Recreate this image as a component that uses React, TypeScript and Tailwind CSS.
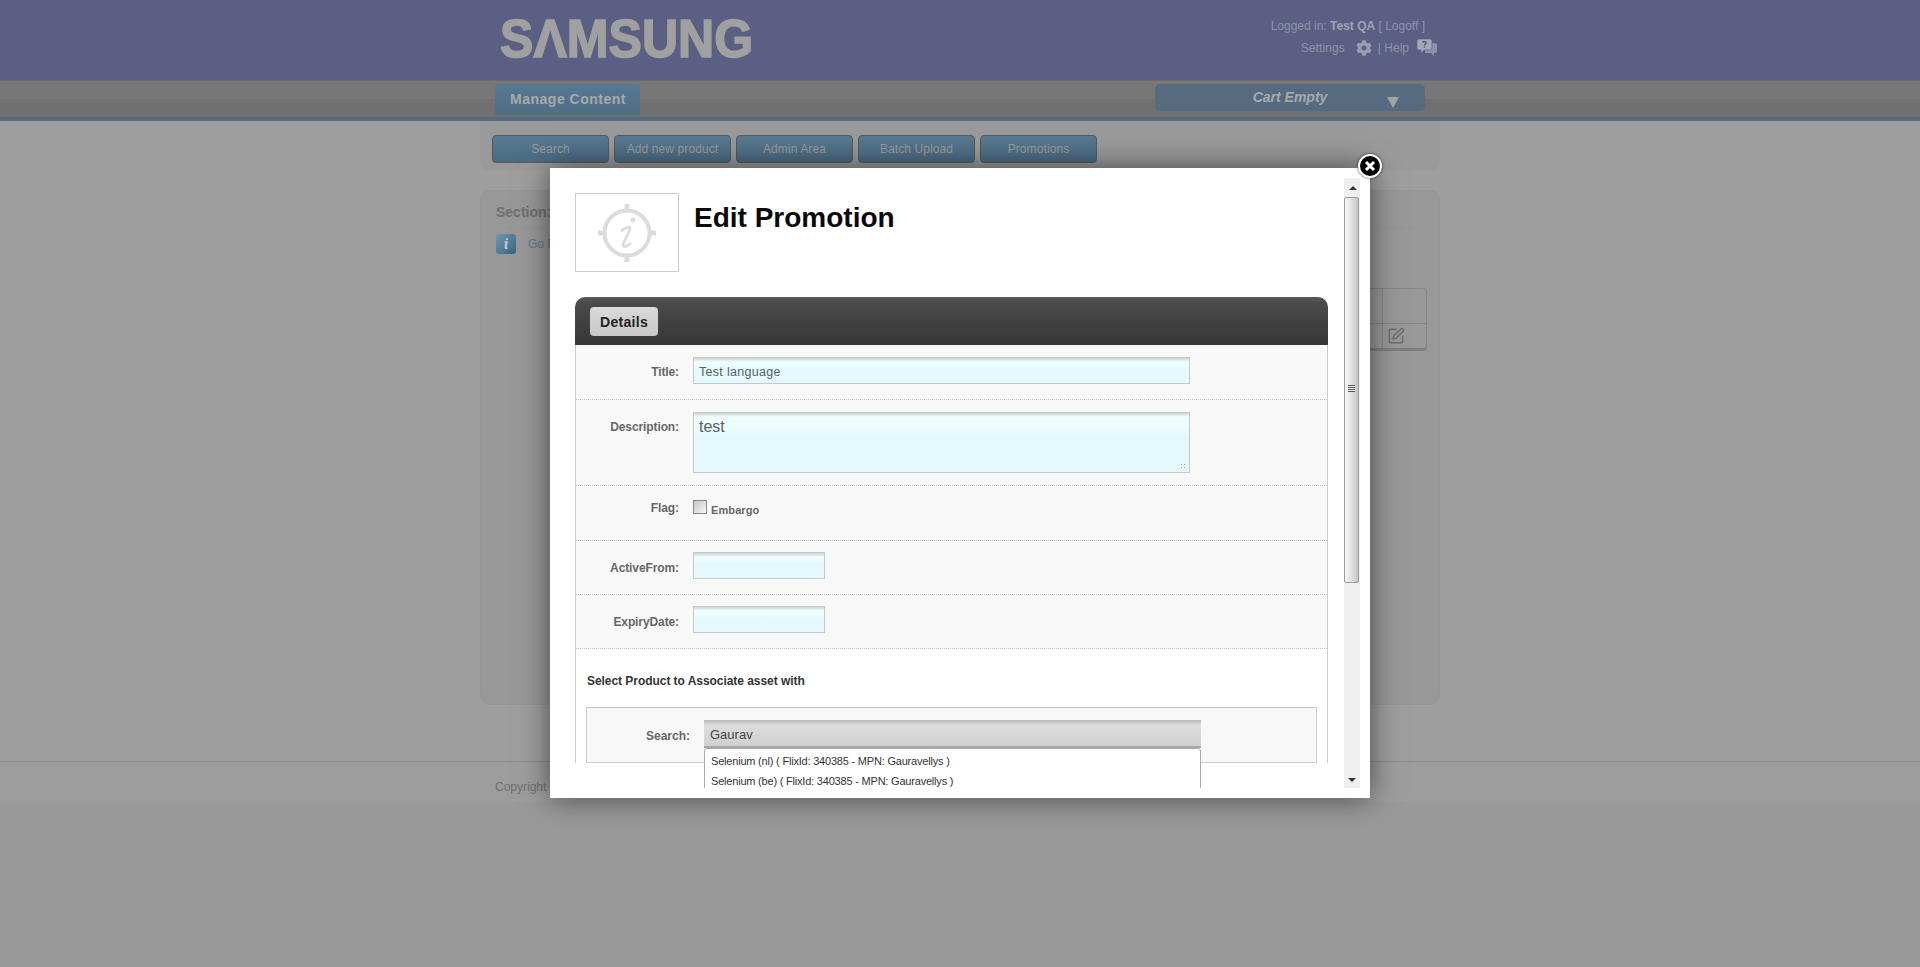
import { SquarePen } from 'lucide-react';
import { FaCog } from 'react-icons/fa';

const navButtons = ['Search', 'Add new product', 'Admin Area', 'Batch Upload', 'Promotions'];

const fieldClass =
  'border border-[#c8c8c8] bg-[linear-gradient(#cbd3d5,#f0ffff_4px,#e3f9fe_45%)] text-[#5f5f5f] outline-none';

const rowClass = 'flex bg-[#f8f8f8] border-b border-dotted border-[#c0c0c0]';

const labelClass = 'w-[103px] shrink-0 text-right text-[12px] font-bold leading-[14px] tracking-[-0.1px] text-[#666]';

function ChatIcon() {
  return (
    <svg width="20" height="17" viewBox="0 0 20 17" className="mt-[-1px]">
      <path d="M8 4h10a2 2 0 0 1 2 2v6a2 2 0 0 1-2 2h-1v3l-3-3H8z" fill="#8f93a9" />
      <path d="M2 0h11a2 2 0 0 1 2 2v7a2 2 0 0 1-2 2H7l-3 3v-3H2a2 2 0 0 1-2-2V2a2 2 0 0 1 2-2z" fill="#a3a6b6" stroke="#5b5f83" strokeWidth="0.6" />
      <path d="M5.6 3.4c.4-1 3.4-1.2 3.4.6 0 1.3-1.6 1.2-1.6 2.6M7.4 7.4v1.4" fill="none" stroke="#50536f" strokeWidth="1.4" />
    </svg>
  );
}

function InfoMark() {
  return (
    <svg width="58" height="58" viewBox="0 0 58 58">
      <circle cx="29" cy="29" r="22.500" fill="none" stroke="#dcdcdc" strokeWidth="4" />
      <path d="M26.500 0h5v6h-5zM26.500 52h5v6h-5zM0 26.500h6v5H0zM52 26.500h6v5h-6z" fill="#dcdcdc" />
      <circle cx="35" cy="16" r="2.500" fill="#dcdcdc" />
      <path d="M23 27c3-2 9-6 9-3 0 4-7 14-7 17 0 3 5 1 8-2" fill="none" stroke="#dcdcdc" strokeWidth="2.800" />
    </svg>
  );
}

function Page() {
  return (
    <div className="flex flex-col">
      <header className="h-[80px] bg-[#5b5f83]">
        <div className="mx-auto flex h-full w-[960px] justify-between pl-[20px] pr-[15px]">
          <div
            aria-label="SAMSUNG"
            className="mt-[9px] h-[60px] origin-left scale-x-[0.945] text-[53px] font-bold leading-[60px] text-[#a0a0a0] [-webkit-text-stroke:1.6px_#a0a0a0]"
          >
            SΛMSUNG
          </div>
          <div className="relative pt-[19px] text-right text-[12px] leading-[14px] text-[#8f93a9]">
            <div>
              Logged in: <span className="font-bold text-[#a0a3b2]">Test QA</span> [ Logoff ]
            </div>
            <div className="mr-[-12px] mt-[7px] flex items-center justify-end">
              <span className="tracking-[0.1px]">Settings</span>
              <FaCog className="ml-[11px] mr-[6px] text-[16px] text-[#9a9db0]" />
              <span>| Help</span>
              <span className="ml-[8px]">
                <ChatIcon />
              </span>
            </div>
          </div>
        </div>
      </header>

      <nav className="h-[41px] border-t border-[#6c6c6c] border-b-[4px] border-b-[#566a80] bg-[linear-gradient(#777777_50%,#707070_50%)]">
        <div className="mx-auto flex h-full w-[960px] justify-between pl-[15px] pr-[15px] pt-[3px]">
          <div className="h-[31px] w-[145px] rounded-t-[4px] bg-[linear-gradient(#567890,#4f6f86)] pl-[1px] text-center text-[14px] font-bold leading-[30px] tracking-[0.5px] text-[#a9a9a9]">
            Manage Content
          </div>
          <div className="relative h-[27px] w-[270px] rounded-[5px] bg-[#566a80] text-center text-[14px] font-bold italic leading-[26px] text-[#a9a9a9]">
            Cart Empty
            <span className="absolute left-[232px] top-[13px] h-0 w-0 border-x-[6.5px] border-t-[11px] border-x-transparent border-t-[#a2a2a2]" />
          </div>
        </div>
      </nav>

      <main className="h-[640px] bg-[#9e9e9e]">
        <div className="mx-auto w-[960px]">
          <div className="flex h-[50px] gap-[5px] rounded-b-[10px] bg-[#9a9a9a] pl-[12px] pt-[14px]">
            {navButtons.map((label) => (
              <div
                key={label}
                className="h-[28px] w-[117px] rounded-[4px] border border-[#555a5e] bg-[linear-gradient(#587a92,#4b6a82)] text-center text-[12px] leading-[26px] tracking-[0.1px] text-[#9c9c9c]"
              >
                {label}
              </div>
            ))}
          </div>

          <section className="mt-[19px] h-[515px] rounded-[10px] border border-[#949494] bg-[#989898] pl-[15px] pr-[12px] pt-[14px]">
            <div className="border-b border-dotted border-[#929292] pb-[8px] text-[14px] font-bold leading-[15px] text-[#6f6f6f]">
              Section:
            </div>
            <div className="mt-[5px] flex items-center gap-[12px] text-[12px] text-[#557a92]">
              <div className="flex h-[20px] w-[20px] items-center justify-center rounded-[3px] bg-[linear-gradient(135deg,#6e96b2,#3b6484)] font-serif text-[15px] font-bold italic text-[#c8c8c8]">
                i
              </div>
              Go Back
            </div>
            <div className="ml-auto mt-[34px] flex h-[63px] w-[80px] flex-col rounded-[4px] border-[1px] border-b-[3px] border-[#858585] border-b-[#7f7f7f]">
              <div className="flex h-[36px] justify-end border-b border-[#858585]">
                <div className="w-[44px] border-l border-[#858585]" />
              </div>
              <div className="ml-auto flex h-[24px] w-[44px] items-center border-l border-[#858585] pl-[4px]">
                <SquarePen size={18} strokeWidth={1.8} className="text-[#6c6c6c]" />
              </div>
            </div>
          </section>
        </div>
      </main>

      <footer className="h-[41px] border-t border-[#8b8b8b] bg-[#9d9d9d]">
        <div className="mx-auto w-[960px] pl-[15px] pt-[18px] text-[12px] leading-[14px] text-[#6f6f6f]">
          Copyright
        </div>
      </footer>
    </div>
  );
}

function Scrollbar() {
  return (
    <div className="relative h-[610px] w-[16px] shrink-0 bg-[#efefef]">
      <div className="absolute left-[5px] top-[8px] h-0 w-0 border-x-[4px] border-b-[4px] border-x-transparent border-b-[#333]" />
      <div className="absolute left-0 top-[19px] flex h-[386px] w-[15px] items-center justify-center rounded-[2px] border border-[#9c9c9c] bg-[linear-gradient(90deg,#f4f4f4,#e4e4e4_45%,#c4c4c6)] pb-[3px]">
        <div className="h-[7px] w-[7px] bg-[repeating-linear-gradient(#555_0,#555_1px,#eee_1px,#eee_2px)]" />
      </div>
      <div className="absolute bottom-[6px] left-[4px] h-0 w-0 border-x-[4px] border-t-[4px] border-x-transparent border-t-[#333]" />
    </div>
  );
}

function Modal() {
  return (
    <div className="absolute left-[550px] top-[168px] h-[630px] w-[820px] bg-white py-[10px] pl-[25px] shadow-[0_0_28px_rgba(0,0,0,0.55)]">
      <button className="absolute right-[-12px] top-[-14px] flex h-[24px] w-[24px] items-center justify-center rounded-full border-2 border-white bg-black shadow-[0_0_3px_rgba(0,0,0,0.7)]">
        <svg width="12" height="12" viewBox="0 0 12 12">
          <path d="M2 2l8 8M10 2l-8 8" stroke="#fff" strokeWidth="3" />
        </svg>
      </button>

      <div className="flex h-[610px]">
        <div className="h-full w-[753px] overflow-hidden">
          <div className="flex h-[119px] pt-[15px]">
            <div className="flex h-[79px] w-[104px] items-center justify-center border border-[#cccccc]">
              <InfoMark />
            </div>
            <h1 className="ml-[15px] mt-[8px] text-[28px] font-bold leading-[34px] text-[#0a0a0a]">Edit Promotion</h1>
          </div>

          <div className="flex h-[48px] items-start rounded-t-[10px] bg-[linear-gradient(#5a5a5a,#4a4a4a_12%,#383638)] pl-[15px] pt-[10px]">
            <div className="h-[29px] w-[68px] rounded-[4px] bg-[linear-gradient(#dadada,#c8c8c8)] text-center text-[14px] font-bold leading-[30px] tracking-[0.3px] text-[#222]">
              Details
            </div>
          </div>

          <div className="border-x border-[#cccccc]">
            <div className={`${rowClass} h-[55px] pt-[12px]`}>
              <div className={`${labelClass} pt-[8px]`}>Title:</div>
              <input readOnly defaultValue="Test language" className={`${fieldClass} ml-[14px] h-[27px] w-[497px] pl-[5px] pt-[2px] text-[12.500px] tracking-[0.3px]`} />
            </div>

            <div className={`${rowClass} h-[86px] pt-[12px]`}>
              <div className={`${labelClass} pt-[8px]`}>Description:</div>
              <div className="relative ml-[14px] h-[61px] w-[497px]">
                <textarea readOnly defaultValue="test" className={`${fieldClass} block h-full w-full resize-none pl-[5px] pt-[4px] text-[16px] leading-[20px]`} />
                <div className="absolute bottom-[3px] right-[3px] h-[7px] w-[7px] bg-[radial-gradient(#aaa_1px,transparent_1px)] bg-[length:3px_3px]" />
              </div>
            </div>

            <div className={`${rowClass} h-[55px] pt-[14px]`}>
              <div className={`${labelClass} pt-[1px]`}>Flag:</div>
              <input type="checkbox" readOnly className="ml-[14px] h-[14px] w-[14px] appearance-none border border-[#8a8a8a] bg-[linear-gradient(135deg,#c8c8c8,#f4f4f4)]" />
              <span className="ml-[4px] pt-[3px] text-[11px] font-bold leading-[14px] tracking-[0.1px] text-[#666]">Embargo</span>
            </div>

            <div className={`${rowClass} h-[54px] pt-[11px]`}>
              <div className={`${labelClass} pt-[9px]`}>ActiveFrom:</div>
              <input readOnly className={`${fieldClass} ml-[14px] h-[27px] w-[132px]`} />
            </div>

            <div className={`${rowClass} h-[54px] pt-[11px]`}>
              <div className={`${labelClass} pt-[9px]`}>ExpiryDate:</div>
              <input readOnly className={`${fieldClass} ml-[14px] h-[27px] w-[132px]`} />
            </div>

            <div className="px-[10px]">
              <div className="pb-[19px] pl-[1px] pt-[25px] text-[12px] font-bold leading-[14px] tracking-[-0.05px] text-[#333]">
                Select Product to Associate asset with
              </div>
              <div className="relative flex h-[56px] w-[731px] border border-[#cccccc] border-t-[#c4c4c4] bg-[#f8f8f8] pt-[12px]">
                <div className="w-[103px] shrink-0 pt-[9px] text-right text-[12px] font-bold leading-[14px] text-[#666]">Search:</div>
                <div className="ml-[14px] h-[28px] w-[497px] border-b-2 border-[#a8a8a8] bg-[linear-gradient(#b8b8b8,#dddddd_5px,#d0d0d0)] pl-[6px] text-[13px] leading-[30px] text-[#444]">
                  Gaurav
                </div>
                <div className="absolute left-[117px] top-[40px] w-[497px] rounded-t-[3px] border border-[#aaaaaa] bg-white pl-[6px] pt-[2px] text-[11px] leading-[20px] tracking-[-0.2px] text-[#333]">
                  <div>Selenium (nl) ( FlixId: 340385 - MPN: Gauravellys )</div>
                  <div>Selenium (be) ( FlixId: 340385 - MPN: Gauravellys )</div>
                </div>
              </div>
            </div>
          </div>
        </div>
        <div className="ml-[16px]">
          <Scrollbar />
        </div>
      </div>
    </div>
  );
}

export default function App() {
  return (
    <div className="relative min-h-[967px] overflow-hidden bg-[#999999] font-['Liberation_Sans',Arial,sans-serif]">
      <Page />
      <Modal />
    </div>
  );
}
